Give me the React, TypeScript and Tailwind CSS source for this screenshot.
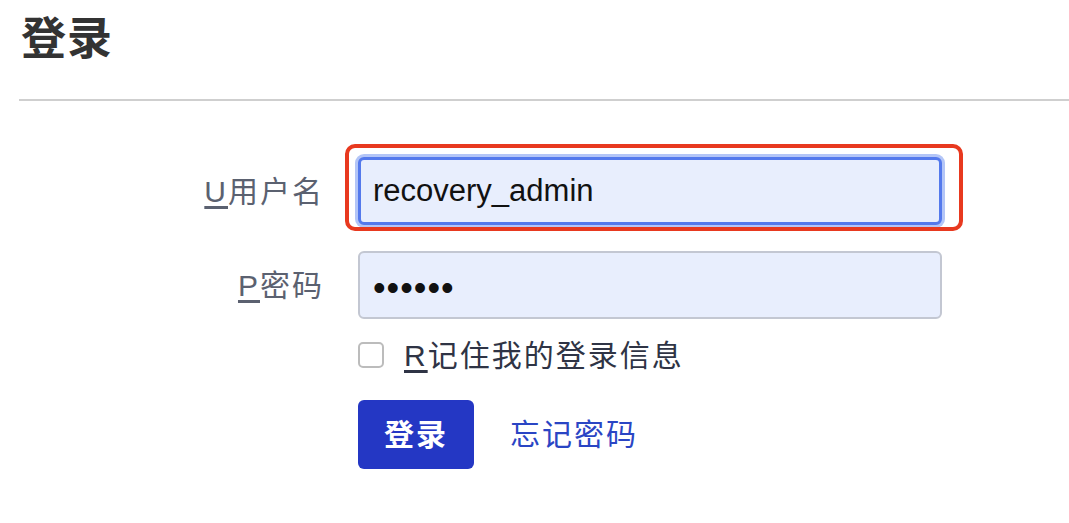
import React from 'react';

const font = { fontFamily: '"Liberation Sans", "Noto Sans CJK SC", sans-serif' };

export default function App() {
    return (
        <div className="min-h-[523px] bg-white text-[#333]" style={font}>
            <div className="pl-[21px] pt-[13px]">
                <h1 className="text-[45px] leading-[54px] font-bold tracking-[1px] text-[#333]">登录</h1>
            </div>
            <div className="ml-[19px] mt-[32px] border-t-2 border-[#cfcfcf]" />

            <form className="mt-[56px] grid grid-cols-[322px_584px] gap-x-[36px] items-center">
                <label className="-mr-[2px] text-right text-[30px] tracking-[2px] text-[#5b6170]">
                    <span className="underline underline-offset-4">U</span>用户名
                </label>
                <div className="relative h-[68px]">
                    <input
                        readOnly
                        defaultValue="recovery_admin"
                        className="h-full w-full rounded-[6px] border-[3px] border-[#5479ec] bg-[#e8eefd] px-[12px] text-[31px] text-[#111] outline-none shadow-[0_0_0_3px_#b3c5f7]"
                    />
                    <div className="pointer-events-none absolute -left-[13px] -right-[21px] -top-[13px] -bottom-[6px] rounded-[10px] border-4 border-[#e8391f]" />
                </div>

                <label className="-mr-[2px] mt-[26px] text-right text-[30px] tracking-[2px] text-[#5b6170]">
                    <span className="underline underline-offset-4">P</span>密码
                </label>
                <input
                    readOnly
                    defaultValue="••••••"
                    className="mt-[26px] h-[68px] w-full rounded-[6px] border-2 border-[#c3c7d2] bg-[#e8eefd] px-[13px] pt-[6px] text-[36px] tracking-[1px] text-[#111] outline-none"
                />

                <div />
                <label className="mt-[15px] flex h-[42px] items-center gap-[20px] text-[30px] tracking-[2px] text-[#2f3445]">
                    <span className="h-[26px] w-[26px] shrink-0 rounded-[5px] border-2 border-[#bcbcbc] bg-white" />
                    <span>
                        <span className="underline underline-offset-4">R</span>记住我的登录信息
                    </span>
                </label>

                <div />
                <div className="mt-[24px] flex items-center gap-[36px]">
                    <button
                        type="button"
                        className="h-[69px] w-[116px] rounded-[6px] bg-[#2437c4] text-[30px] font-bold tracking-[2px] text-white"
                    >
                        登录
                    </button>
                    <a className="text-[30px] tracking-[2px] text-[#2a45c4]">忘记密码</a>
                </div>
            </form>
        </div>
    );
}
